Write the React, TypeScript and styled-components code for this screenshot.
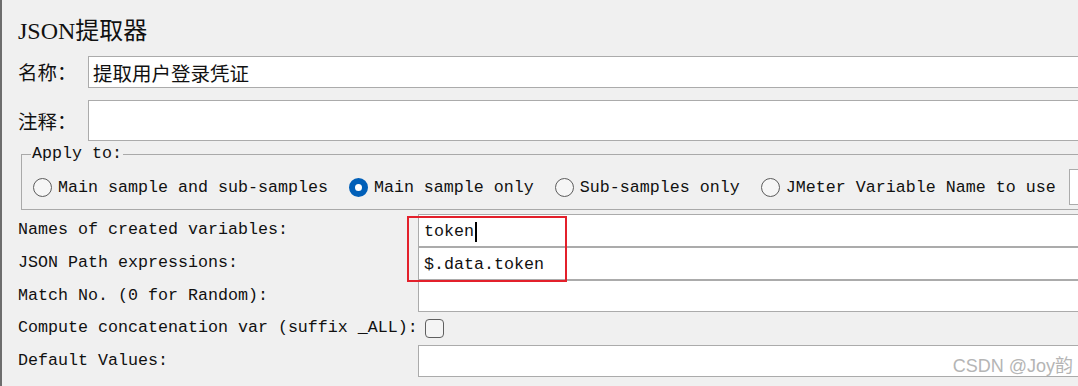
import React from 'react';
import styled, { createGlobalStyle } from 'styled-components';

const GlobalStyle = createGlobalStyle`
  html, body {
    margin: 0;
    padding: 0;
    background: #f0f0f0;
    overflow: hidden;
  }
`;

const MONO = `"Liberation Mono", "Noto Sans CJK SC", monospace`;
const CJK = `"Noto Sans CJK SC", "Liberation Sans", sans-serif`;

const Window = styled.div`
  position: relative;
  width: 1078px;
  height: 386px;
  overflow: hidden;
  background: #f0f0f0;
`;

const Panel = styled.div`
  box-sizing: border-box;
  width: 1120px;
  height: 386px;
  border-left: 2px solid #6d6d6d;
  padding: 16px 0 0 16px;
  display: flex;
  flex-direction: column;
  color: #111;
`;

const Title = styled.h1`
  margin: 0;
  height: 30px;
  font-family: "Liberation Serif", "Noto Sans CJK SC", serif;
  font-size: 24px;
  font-weight: normal;
  line-height: 30px;
`;

const NameRow = styled.div<{ $top: number; $h: number }>`
  display: flex;
  align-items: center;
  margin-top: ${({ $top }) => $top}px;
  height: ${({ $h }) => $h}px;
`;

const CjkLabel = styled.span`
  width: 70px;
  font-family: ${CJK};
  font-size: 19.5px;
  line-height: 24px;
`;

const WideField = styled.div`
  flex: 1;
  align-self: stretch;
  box-sizing: border-box;
  border: 1px solid #ababab;
  background: #fff;
  padding-left: 4px;
  display: flex;
  align-items: center;
  font-family: ${CJK};
  font-size: 19.5px;
`;

const Group = styled.fieldset`
  margin: 3px 0 0 3px;
  padding: 5px 0 4px 9px;
  border: 1px solid #a9a9a9;
  min-inline-size: 0;
`;

const Legend = styled.legend`
  padding: 0 1px;
  font-family: ${MONO};
  font-size: 16.67px;
  line-height: 20px;
`;

const RadioRow = styled.div`
  display: flex;
  align-items: center;
  height: 36px;
  margin-left: 2px;
  gap: 21px;
`;

const RadioOption = styled.label`
  display: flex;
  align-items: center;
  gap: 6px;
  font-family: ${MONO};
  font-size: 16.67px;
  white-space: nowrap;
`;

const RadioDot = styled.span<{ $on?: boolean }>`
  box-sizing: border-box;
  width: 19px;
  height: 19px;
  border-radius: 50%;
  border: ${({ $on }) => ($on ? '6px solid #005fb8' : '1px solid #5c5c5c')};
  background: ${({ $on }) => ($on ? '#fff' : '#f6f6f6')};
`;

const VarField = styled.div`
  box-sizing: border-box;
  width: 200px;
  height: 36px;
  margin-left: -8px;
  border: 1px solid #ababab;
  background: #fff;
`;

const Rows = styled.div`
  position: relative;
  margin-top: 4px;
  display: flex;
  flex-direction: column;
`;

const Row = styled.div<{ $h: number }>`
  display: flex;
  height: ${({ $h }) => $h}px;
`;

const FieldLabel = styled.span`
  width: 400px;
  flex: none;
  padding-top: 6px;
  font-family: ${MONO};
  font-size: 16.67px;
  line-height: 20px;
  white-space: nowrap;
`;

const TextField = styled.div`
  flex: 1;
  box-sizing: border-box;
  border: 1px solid #ababab;
  background: #fff;
  padding: 2px 0 0 5px;
  display: flex;
  align-items: center;
  font-family: ${MONO};
  font-size: 16.67px;
  white-space: pre;
`;

const Caret = styled.span`
  display: inline-block;
  width: 2px;
  height: 20px;
  margin-left: 1px;
  background: #000;
`;

const CheckCell = styled.div`
  flex: 1;
  display: flex;
  align-items: center;
  padding-left: 7px;
`;

const CheckBox = styled.span`
  box-sizing: border-box;
  width: 19px;
  height: 19px;
  border: 1px solid #5f5f5f;
  border-radius: 4px;
  background: #f4f4f4;
`;

const Highlight = styled.div`
  position: absolute;
  left: 389px;
  top: 2px;
  width: 160px;
  height: 66px;
  box-sizing: border-box;
  border: 2px solid #e3202b;
  pointer-events: none;
`;

const Watermark = styled.div`
  position: absolute;
  right: 5px;
  bottom: 10px;
  font-family: "Liberation Sans", "Noto Sans CJK SC", sans-serif;
  font-size: 18px;
  line-height: 20px;
  color: #b5b5b5;
`;

const radios = [
  { label: 'Main sample and sub-samples' },
  { label: 'Main sample only', on: true },
  { label: 'Sub-samples only' },
  { label: 'JMeter Variable Name to use' },
];

const fields = [
  { label: 'Names of created variables:', value: 'token', caret: true, h: 33 },
  { label: 'JSON Path expressions:', value: '$.data.token', h: 33 },
  { label: 'Match No. (0 for Random):', value: '', h: 32 },
  { label: 'Compute concatenation var (suffix _ALL):', check: true, h: 33 },
  { label: 'Default Values:', value: '', h: 32 },
];

const App = () => {
  return (
    <Window>
      <GlobalStyle />
      <Panel>
        <Title>JSON提取器</Title>

        <NameRow $top={10} $h={32}>
          <CjkLabel>名称：</CjkLabel>
          <WideField>提取用户登录凭证</WideField>
        </NameRow>
        <NameRow $top={12} $h={41}>
          <CjkLabel>注释：</CjkLabel>
          <WideField />
        </NameRow>

        <Group>
          <Legend>Apply to:</Legend>
          <RadioRow>
            {radios.map((r) => (
              <RadioOption key={r.label}>
                <RadioDot $on={r.on} />
                {r.label}
              </RadioOption>
            ))}
            <VarField />
          </RadioRow>
        </Group>

        <Rows>
          {fields.map((f) => (
            <Row key={f.label} $h={f.h}>
              <FieldLabel>{f.label}</FieldLabel>
              {f.check ? (
                <CheckCell>
                  <CheckBox />
                </CheckCell>
              ) : (
                <TextField>
                  {f.value}
                  {f.caret && <Caret />}
                </TextField>
              )}
            </Row>
          ))}
          <Highlight />
        </Rows>
      </Panel>
      <Watermark>CSDN @Joy韵</Watermark>
    </Window>
  );
};

export default App;
